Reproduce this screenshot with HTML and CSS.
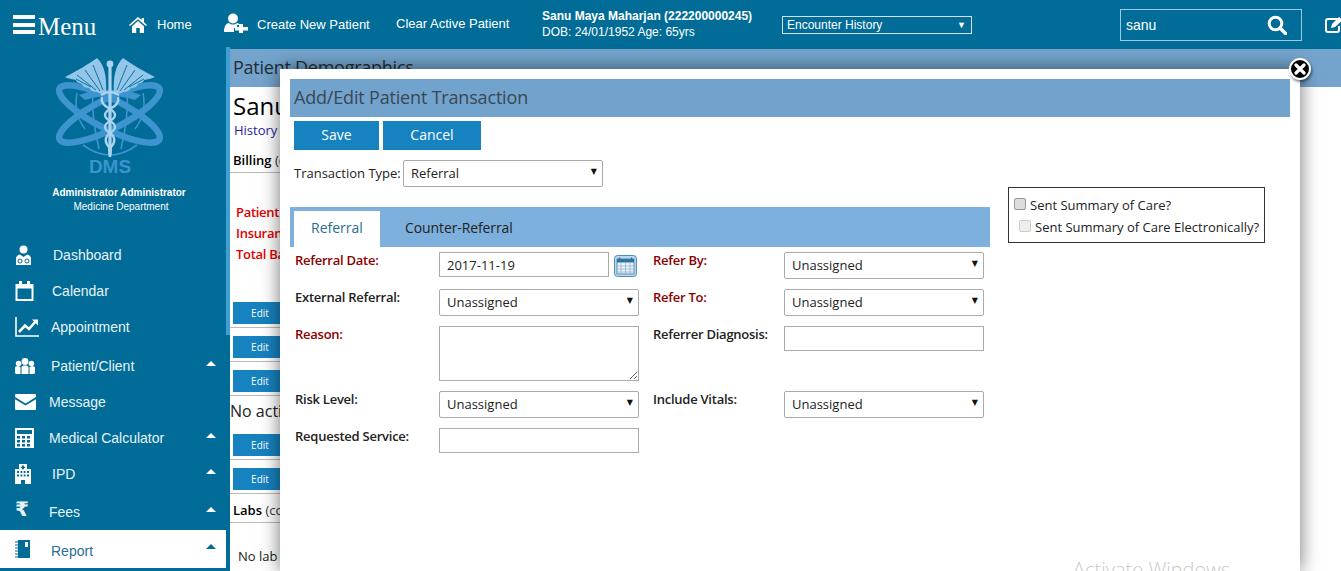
FILE: index.html
```html
<!DOCTYPE html>
<html lang="en">
<head>
    <meta charset="UTF-8">
    <title>Add/Edit Patient Transaction</title>
    <link rel="stylesheet" href="styles.css">
</head>
<body>
    <header class="topbar">
        <div class="menu-toggle">
            <span class="burger"><i></i><i></i><i></i></span>
            <span class="menu-word">Menu</span>
        </div>
        <a class="top-link home-link">
            <svg width="18" height="16" viewBox="0 0 18 16"><path fill="#fff" d="M9 0 L12.5 3 V1 H15 V5.2 L18 8 L17 9 L9 2.2 L1 9 L0 8 Z M3 9.2 L9 4 L15 9.2 V16 H10.8 V11 H7.2 V16 H3 Z"/></svg>
            <span>Home</span>
        </a>
        <a class="top-link new-link">
            <svg width="24" height="20" viewBox="0 0 24 20"><circle cx="9" cy="5.5" r="5" fill="#fff"/><path fill="#fff" d="M0 19 C0 13 2 10.5 5 10 C7 12 11 12 13 10 C14.5 10.2 15.5 11 16 12 H13 V15 H10 V19 Z"/><path fill="#fff" d="M15 11 H19 V14 H24 V17.5 H19 V20.5 H15 V17.5 H11 V14 H15 Z"/></svg>
            <span>Create New Patient</span>
        </a>
        <a class="top-link clear-link">Clear Active Patient</a>
        <div class="patient-info">
            <strong>Sanu Maya Maharjan (222200000245)</strong>
            <span>DOB: 24/01/1952 Age: 65yrs</span>
        </div>
        <div class="encounter">
            <span>Encounter History</span>
            <span class="encounter-arrow">▼</span>
        </div>
        <div class="search-box">
            <span>sanu</span>
            <svg width="20" height="20" viewBox="0 0 20 20"><circle cx="8.5" cy="8.5" r="6.3" fill="none" stroke="#fff" stroke-width="3"/><path d="M13 13 L18.5 18.5" stroke="#fff" stroke-width="3.4" stroke-linecap="round"/></svg>
        </div>
        <svg class="note-icon" width="20" height="18" viewBox="0 0 20 18"><path d="M13 3 H3 Q1 3 1 5 V14 Q1 16 3 16 H12 Q14 16 14 14 V10" fill="none" stroke="#fff" stroke-width="2"/><path d="M6 12 L7 8 L14 1 L18 4 L10 11 Z" fill="#fff"/></svg>
    </header>

    <div class="layout">
        <aside class="sidebar">
            <svg class="logo" width="108" height="122" viewBox="0 0 108 122">
                <!-- globe lines -->
                <g fill="none" stroke="#3d94cf" stroke-width="1.6">
                    <path d="M22 36 Q18 56 30 72"/>
                    <path d="M88 36 Q92 56 80 72"/>
                    <path d="M28 88 Q55 108 82 88"/>
                    <path d="M38 34 Q36 58 44 92"/>
                    <path d="M72 34 Q74 58 66 92"/>
                </g>
                <path d="M24 38 Q55 27 86 38 L80 43 Q55 35 30 43 Z" fill="#3d94cf"/>
                <!-- orbits -->
                <g fill="none" stroke="#3d94cf" stroke-width="6.5">
                    <ellipse cx="54.5" cy="57" rx="56" ry="15" transform="rotate(27 54.5 57)"/>
                    <ellipse cx="54.5" cy="57" rx="56" ry="15" transform="rotate(-27 54.5 57)"/>
                </g>
                <!-- wings -->
                <g fill="#93c6e8">
                    <path d="M51 36 C52 22 50 8 42 1 C34 7 20 15 10 20 C14 22 18 22 21 23 C21 25 24 26 27 27 C28 30 31 31 34 31 C36 34 39 35 42 35 C45 37 48 37 51 36 Z"/>
                    <path d="M59 36 C58 22 60 8 68 1 C76 7 90 15 100 20 C96 22 92 22 89 23 C89 25 86 26 83 27 C82 30 79 31 76 31 C74 34 71 35 68 35 C65 37 62 37 59 36 Z"/>
                </g>
                <g fill="none" stroke="#006c97" stroke-width="0.9">
                    <path d="M48 33 L38 8 M45 34 L30 13 M41 33 L22 18 M36 30 L21 22"/>
                    <path d="M62 33 L72 8 M65 34 L80 13 M69 33 L88 18 M74 30 L89 22"/>
                </g>
                <!-- staff and snakes -->
                <path d="M55 4 V98" stroke="#a9d3ef" stroke-width="3.2"/>
                <circle cx="55" cy="7" r="3.4" fill="#a9d3ef"/>
                <g fill="none" stroke="#a9d3ef" stroke-width="2.4">
                    <path d="M47 40 Q45 47 55 52 Q65 58 55 64 Q45 70 55 76 Q63 82 56 90 L55 100"/>
                    <path d="M63 40 Q65 47 55 52 Q45 58 55 64 Q65 70 55 76 Q47 82 54 90 L55 100"/>
                    <path d="M46 38 Q55 32 64 38"/>
                </g>
                <text class="logo-text" x="55" y="116">DMS</text>
            </svg>
            <div class="user-name">Administrator Administrator</div>
            <div class="user-dept">Medicine Department</div>

            <nav class="nav">
                <a class="nav-item">
                    <span class="nav-icon w38"><svg width="17" height="20" viewBox="0 0 17 20"><circle cx="8.5" cy="4.5" r="4" fill="#fff"/><path fill="#fff" d="M1 20 V14 Q1 10 5 9.5 L8.5 12 L12 9.5 Q16 10 16 14 V20 Z"/><circle cx="5" cy="16" r="2" fill="none" stroke="#006c97"/><circle cx="12" cy="16" r="2" fill="none" stroke="#006c97"/></svg></span>
                    <span>Dashboard</span>
                </a>
                <a class="nav-item">
                    <span class="nav-icon w37"><svg width="19" height="20" viewBox="0 0 19 20"><path fill="#fff" d="M1 3 H4 V0 H7 V3 H12 V0 H15 V3 H18.5 V20 H0.5 V3 Z M2.5 7.5 V18 H16.5 V7.5 Z"/></svg></span>
                    <span>Calendar</span>
                </a>
                <a class="nav-item">
                    <span class="nav-icon w36"><svg width="24" height="20" viewBox="0 0 24 20"><path d="M1 0 V19 H24" fill="none" stroke="#fff" stroke-width="1.6"/><path d="M4 15 L10 8.5 L14 12 L21 4" fill="none" stroke="#fff" stroke-width="2.6"/><path d="M17 2.5 H23 V8.5 Z" fill="#fff"/></svg></span>
                    <span>Appointment</span>
                </a>
                <a class="nav-item nav-gap3">
                    <span class="nav-icon w36"><svg width="20" height="16" viewBox="0 0 20 16"><circle cx="10" cy="3.5" r="3.4" fill="#fff"/><circle cx="3.6" cy="5.5" r="2.8" fill="#fff"/><circle cx="16.4" cy="5.5" r="2.8" fill="#fff"/><path fill="#fff" d="M0 15 V10 Q0 8 3 8 L5.5 9 V16 H1 Z M14.5 9 L17 8 Q20 8 20 10 V15 L19 16 H14.5 Z M6.5 16 V9 Q7 7.5 8.5 7.5 H11.5 Q13 7.5 13.5 9 V16 Z"/></svg></span>
                    <span>Patient/Client</span>
                    <i class="caret"></i>
                </a>
                <a class="nav-item">
                    <span class="nav-icon w34"><svg width="21" height="16" viewBox="0 0 21 16"><path fill="#fff" d="M0 1 Q0 0 1 0 H20 Q21 0 21 1 V3 L10.5 9.5 L0 3 Z M0 5.2 L10.5 11.5 L21 5.2 V15 Q21 16 20 16 H1 Q0 16 0 15 Z"/></svg></span>
                    <span>Message</span>
                </a>
                <a class="nav-item">
                    <span class="nav-icon w34"><svg width="19" height="20" viewBox="0 0 19 20"><path fill="#fff" fill-rule="evenodd" d="M0 0 H19 V20 H0 Z M2 2 V6 H17 V2 Z M2 8 V10.5 H5 V8 Z M7 8 V10.5 H10 V8 Z M12 8 V10.5 H15 V8 Z M2 12 V14.5 H5 V12 Z M7 12 V14.5 H10 V12 Z M12 12 V14.5 H15 V12 Z M2 16 V18.5 H5 V16 Z M7 16 V18.5 H10 V16 Z M12 16 V18.5 H15 V16 Z"/></svg></span>
                    <span>Medical Calculator</span>
                    <i class="caret"></i>
                </a>
                <a class="nav-item">
                    <span class="nav-icon w37"><svg width="16" height="20" viewBox="0 0 16 20"><path fill="#fff" fill-rule="evenodd" d="M0 5 H4 V0 H12 V5 H16 V20 H10 V16 H6 V20 H0 Z M7 1.5 V2.8 H5.8 V4 H7 V5.3 H9 V4 H10.2 V2.8 H9 V1.5 Z M2 7 V9 H4 V7 Z M5.5 7 V9 H7.3 V7 Z M8.7 7 V9 H10.5 V7 Z M12 7 V9 H14 V7 Z M2 10.5 V12.5 H4 V10.5 Z M5.5 10.5 V12.5 H7.3 V10.5 Z M8.7 10.5 V12.5 H10.5 V10.5 Z M12 10.5 V12.5 H14 V10.5 Z"/></svg></span>
                    <span>IPD</span>
                    <i class="caret"></i>
                </a>
                <a class="nav-item nav-gap2">
                    <span class="nav-icon w34 nav-rupee">₹</span>
                    <span>Fees</span>
                    <i class="caret"></i>
                </a>
                <a class="nav-item nav-active">
                    <span class="nav-icon w36"><svg width="15" height="18" viewBox="0 0 15 18"><path fill="#006c97" d="M3 0 H15 V18 H3 Z"/><path d="M0 2 H4 M0 5 H4 M0 8 H4 M0 11 H4 M0 14 H4 M0 17 H4" stroke="#006c97" stroke-width="1.2"/><path d="M10 2 H13 V7 H10 Z" fill="#fff"/></svg></span>
                    <span>Report</span>
                    <i class="caret"></i>
                </a>
            </nav>
        </aside>

        <div class="accent-strip"></div>

        <main class="page">
            <h2 class="page-title">Patient Demographics</h2>
            <div class="page-inner">
                <div class="patient-name">Sanu Maya Maharjan</div>
                <a class="history-link">History</a>
                <div class="section-head billing-head"><b>Billing</b> (expand)</div>
                <div class="balance">
                    <div>Patient Balance Due</div>
                    <div>Insurance Balance Due</div>
                    <div>Total Balance Due</div>
                </div>
                <div class="edit-row edit-first"><span class="edit-btn">Edit</span></div>
                <div class="edit-row"><span class="edit-btn">Edit</span></div>
                <div class="edit-row"><span class="edit-btn">Edit</span></div>
                <div class="no-active">No active</div>
                <div class="edit-row"><span class="edit-btn">Edit</span></div>
                <div class="edit-row"><span class="edit-btn">Edit</span></div>
                <div class="section-head labs-head"><b>Labs</b> (collapse)</div>
                <div class="no-labs">No lab data</div>
            </div>
        </main>
    </div>

    <!-- transaction popup -->
    <section class="modal">
        <span class="modal-close"><svg width="12" height="12" viewBox="0 0 12 12"><path d="M2 2 L10 10 M10 2 L2 10" stroke="#fff" stroke-width="3.2" stroke-linecap="round"/></svg></span>
        <h3 class="modal-title">Add/Edit Patient Transaction</h3>
        <div class="modal-actions">
            <button class="btn btn-save">Save</button>
            <button class="btn btn-cancel">Cancel</button>
        </div>

        <div class="modal-body">
            <div class="modal-left">
                <div class="type-row">
                    <label>Transaction Type:</label>
                    <div class="select-wrap type-select">
                        <select><option>Referral</option></select>
                    </div>
                </div>

                <div class="tabs">
                    <a class="tab tab-active">Referral</a>
                    <a class="tab tab-other">Counter-Referral</a>
                </div>

                <div class="form-grid">
                    <label class="req">Referral Date:</label>
                    <div class="date-field">
                        <input class="text-input date-input" type="text" value="2017-11-19">
                        <svg width="23" height="22" viewBox="0 0 23 22"><rect x="0.5" y="0.5" width="22" height="21" rx="3" fill="#bcd8ec" stroke="#4f8fb8"/><rect x="3" y="4" width="17" height="15" fill="#eef5fa" stroke="#5d8fb0"/><rect x="3" y="4" width="17" height="3.5" fill="#2f74a0"/><path d="M5.5 2.5 V5 M17.5 2.5 V5" stroke="#2f74a0" stroke-width="1.4"/><path d="M3 11 H20 M3 14 H20 M3 17 H20 M7 8 V19 M11.5 8 V19 M16 8 V19" stroke="#8fb3cc" stroke-width="0.8"/></svg>
                    </div>
                    <label class="req">Refer By:</label>
                    <div class="select-wrap"><select><option>Unassigned</option></select></div>

                    <label>External Referral:</label>
                    <div class="select-wrap"><select><option>Unassigned</option></select></div>
                    <label class="req">Refer To:</label>
                    <div class="select-wrap"><select><option>Unassigned</option></select></div>

                    <label class="req">Reason:</label>
                    <textarea class="text-area"></textarea>
                    <label>Referrer Diagnosis:</label>
                    <input class="text-input" type="text">

                    <label>Risk Level:</label>
                    <div class="select-wrap"><select><option>Unassigned</option></select></div>
                    <label>Include Vitals:</label>
                    <div class="select-wrap"><select><option>Unassigned</option></select></div>

                    <label>Requested Service:</label>
                    <input class="text-input" type="text">
                </div>
            </div>

            <div class="summary-box">
                <label class="check-line"><input type="checkbox" class="check"> Sent Summary of Care?</label>
                <label class="check-line check-second"><input type="checkbox" class="check" disabled> Sent Summary of Care Electronically?</label>
            </div>
        </div>
    </section>

    <div class="watermark">Activate Windows</div>
</body>
</html>
```

FILE: styles.css
```css
* {
    box-sizing: border-box;
}

html, body {
    margin: 0;
    padding: 0;
    height: 571px;
    overflow: hidden;
}

body {
    position: relative;
    font-family: "Liberation Sans", Arial, sans-serif;
    background-color: #fff;
}

/* top bar */
.topbar {
    display: flex;
    align-items: center;
    height: 49px;
    background-color: #006c97;
    color: #fff;
    position: relative;
    z-index: 1;
}

.topbar > * {
    flex-shrink: 0;
}

.menu-toggle {
    display: flex;
    align-items: center;
    margin-left: 13px;
    width: 116px;
}

.burger {
    display: flex;
    flex-direction: column;
    gap: 3.5px;
    width: 22px;
}

.burger i {
    display: block;
    height: 4px;
    background-color: #fff;
}

.menu-word {
    font-family: "Liberation Serif", serif;
    font-size: 25px;
    margin-left: 3px;
    margin-top: 4px;
}

.top-link {
    display: flex;
    align-items: center;
    font-size: 13px;
    color: #fff;
}

.home-link {
    gap: 10px;
    width: 95px;
}

.new-link {
    gap: 9px;
    width: 172px;
}

.new-link svg {
    margin-top: -3px;
}

.clear-link {
    width: 146px;
    margin-top: -2px;
}

.patient-info {
    display: flex;
    flex-direction: column;
    font-size: 12px;
    line-height: 16px;
    width: 240px;
    margin-top: -2px;
}

.encounter {
    display: flex;
    align-items: center;
    justify-content: space-between;
    width: 190px;
    height: 18px;
    padding: 0 5px 0 4px;
    border: 1px solid #cfe3ee;
    font-size: 12px;
}

.encounter-arrow {
    font-size: 9px;
}

.search-box {
    display: flex;
    align-items: center;
    justify-content: space-between;
    width: 182px;
    height: 32px;
    margin-left: 148px;
    padding: 0 14px 0 5px;
    border: 1px solid #9cc9dd;
    font-size: 14px;
}

.note-icon {
    margin-left: 23px;
}

/* sidebar and page behind the popup */
.layout {
    display: flex;
    height: 522px;
    background-color: #006c97;
}

.sidebar {
    width: 226px;
    flex-shrink: 0;
    padding-top: 8px;
    color: #fff;
}

.logo {
    display: block;
    margin-left: 55px;
}

.logo-text {
    font-family: "Liberation Sans", Arial, sans-serif;
    font-size: 19px;
    font-weight: bold;
    text-anchor: middle;
    fill: #3d94cf;
}

.user-name,
.user-dept {
    text-align: center;
    line-height: 14px;
}

.user-name {
    padding-left: 12px;
    font-size: 10px;
    font-weight: bold;
    margin-top: 7px;
}

.user-dept {
    padding-left: 16px;
    font-size: 10px;
}

.nav {
    margin-top: 23px;
}

.nav-item {
    display: flex;
    align-items: center;
    height: 36px;
    padding-left: 15px;
    font-size: 14px;
    color: #e8f3f8;
}

.nav-gap3 {
    margin-top: 3px;
}

.nav-gap2 {
    margin-top: 2px;
}

.nav-icon {
    display: flex;
    align-items: center;
    flex-shrink: 0;
}

.w34 { width: 34px; }
.w36 { width: 36px; }
.w37 { width: 37px; }
.w38 { width: 38px; }

.nav-rupee {
    font-family: "DejaVu Sans", sans-serif;
    font-size: 20px;
    font-weight: bold;
    margin-top: -6px;
}

.caret {
    width: 0;
    height: 0;
    margin-left: auto;
    margin-right: 10px;
    margin-top: -5px;
    border-left: 5px solid transparent;
    border-right: 5px solid transparent;
    border-bottom: 5px solid #fff;
}

.nav-active {
    height: 38px;
    background-color: #fff;
    color: #2a6f93;
    padding-top: 4px;
}

.nav-active .nav-icon {
    margin-top: -4px;
}

.nav-active .caret {
    border-bottom-color: #006c97;
    margin-top: -9px;
}

.accent-strip {
    width: 4px;
    height: 288px;
    margin-top: -2px;
    background-color: #3f9fd2;
    z-index: 2;
}

.page {
    flex: 1;
    height: 522px;
    background-color: #fff;
    font-family: "Open Sans", sans-serif;
    color: #222;
    overflow: hidden;
}

.page-title {
    margin: 0;
    height: 38px;
    padding-left: 3px;
    background-color: #74a4cc;
    font-size: 18px;
    font-weight: 400;
    letter-spacing: -0.25px;
    line-height: 36px;
    color: #1f2d38;
}

.page-inner {
    width: 500px;
}

.patient-name {
    margin: 4px 0 0 3px;
    font-size: 24px;
    line-height: 30px;
    color: #000;
    white-space: nowrap;
}

.history-link {
    display: block;
    margin: 0 0 0 4px;
    font-size: 13px;
    line-height: 18px;
    color: #2a1ea0;
}

.section-head {
    padding-left: 3px;
    font-size: 13px;
    color: #333;
    white-space: nowrap;
    border-bottom: 1px solid #bbb;
}

.section-head b {
    font-weight: 600;
    color: #000;
}

.billing-head {
    margin-top: 12px;
    height: 22px;
    line-height: 18px;
}

.balance {
    margin: 29px 0 0 6px;
    font-size: 13px;
    font-weight: 600;
    letter-spacing: -0.3px;
    line-height: 21px;
    color: #e00000;
    white-space: nowrap;
}

.edit-row {
    height: 34px;
    padding: 8px 0 0 3px;
    border-bottom: 1px solid #bbb;
}

.edit-first {
    margin-top: 29px;
}

.edit-btn {
    display: block;
    width: 54px;
    height: 22px;
    background-color: #1682bf;
    color: #fff;
    font-size: 10px;
    line-height: 22px;
    text-align: center;
}

.no-active {
    height: 30px;
    font-size: 16px;
    line-height: 30px;
    white-space: nowrap;
}

.labs-head {
    height: 29px;
    line-height: 32px;
}

.no-labs {
    margin: 24px 0 0 8px;
    font-size: 13px;
    line-height: 18px;
    white-space: nowrap;
}

/* popup */
.modal {
    position: absolute;
    left: 280px;
    top: 69px;
    width: 1020px;
    height: 502px;
    padding: 10px;
    background-color: #fff;
    box-shadow: 0 0 18px rgba(0, 0, 0, 0.55);
    font-family: "Open Sans", sans-serif;
    font-size: 13px;
    color: #222;
    z-index: 3;
}

.modal-close {
    position: absolute;
    top: -11px;
    right: -11px;
    display: flex;
    align-items: center;
    justify-content: center;
    width: 22px;
    height: 22px;
    border-radius: 50%;
    background-color: #000;
    border: 2px solid #fff;
    box-shadow: 1px 2px 3px rgba(0, 0, 0, 0.5);
}

.modal-title {
    margin: 0;
    height: 38px;
    padding-left: 4px;
    background-color: #72a3cc;
    font-size: 18px;
    font-weight: 400;
    letter-spacing: -0.18px;
    line-height: 37px;
    color: #3a4854;
}

.modal-actions {
    display: flex;
    gap: 4px;
    margin-top: 4px;
    padding-left: 4px;
}

.btn {
    height: 29px;
    padding: 0 0 2px;
    border: 0;
    background-color: #1682bf;
    color: #fff;
    font-family: "Open Sans", sans-serif;
    font-size: 14px;
}

.btn-save {
    width: 85px;
}

.btn-cancel {
    width: 98px;
}

.modal-body {
    display: flex;
    margin-top: 10px;
}

.modal-left {
    width: 700px;
    flex-shrink: 0;
}

.type-row {
    display: flex;
    align-items: center;
    gap: 3px;
    padding-left: 4px;
    height: 27px;
}

.type-row label {
    width: 106px;
    margin-top: -2px;
    white-space: nowrap;
}

.type-select {
    width: 200px;
}

.tabs {
    display: flex;
    align-items: flex-end;
    height: 40px;
    margin-top: 20px;
    padding-left: 4px;
    background-color: #7db0dc;
}

.tab {
    display: block;
    height: 36px;
    padding: 0 25px 0 17px;
    font-size: 14px;
    line-height: 34px;
    color: #222;
}

.tab-active {
    width: 86px;
    padding: 0 0 0 17px;
    background-color: #fff;
    color: #2a6f8f;
}

.tab-other {
    margin-left: 8px;
    letter-spacing: -0.1px;
}

.form-grid {
    display: grid;
    grid-template-columns: 144px 214px 131px 200px;
    align-items: start;
    row-gap: 10px;
    margin-top: 5px;
    padding-left: 5px;
}

.form-grid label {
    font-weight: 600;
    letter-spacing: -0.25px;
    line-height: 16px;
    white-space: nowrap;
    color: #222;
}

.form-grid label.req {
    color: #8b0000;
}

.text-input {
    display: block;
    width: 200px;
    height: 25px;
    padding: 0 7px;
    border: 1px solid #aaa;
    font-family: "Open Sans", sans-serif;
    font-size: 13px;
    color: #222;
}

.date-field {
    display: flex;
    align-items: flex-start;
    gap: 5px;
}

.date-input {
    width: 170px;
}

.date-field svg {
    margin-top: 3px;
}

.text-area {
    display: block;
    width: 200px;
    height: 55px;
    padding: 0;
    border: 1px solid #aaa;
}

.select-wrap {
    position: relative;
    width: 200px;
    height: 27px;
}

.select-wrap select {
    display: block;
    width: 100%;
    height: 27px;
    padding: 0 7px 2px;
    border: 1px solid #aaa;
    border-radius: 2px;
    background-color: #fff;
    font-family: "Open Sans", sans-serif;
    font-size: 13px;
    color: #222;
    appearance: none;
}

.select-wrap::after {
    content: "▼";
    position: absolute;
    right: 6px;
    top: 7px;
    font-family: "DejaVu Sans", sans-serif;
    font-size: 8px;
    color: #111;
}

.summary-box {
    width: 257px;
    height: 56px;
    margin: 27px 0 0 18px;
    padding-left: 5px;
    border: 1px solid #333;
}

.check-line {
    display: flex;
    align-items: center;
    gap: 4px;
    height: 22px;
    white-space: nowrap;
}

.check-line:first-child {
    margin-top: 6px;
}

.check-second {
    padding-left: 5px;
}

.check {
    width: 12px;
    height: 12px;
    margin: -3px 0 0 0;
    border: 1px solid #999;
    border-radius: 2px;
    background-color: #ddd;
    appearance: none;
}

.check:disabled {
    border-color: #ccc;
    background-color: #eee;
}

.watermark {
    position: absolute;
    left: 1073px;
    top: 558px;
    font-family: "Open Sans", sans-serif;
    font-size: 20px;
    font-weight: 300;
    line-height: 24px;
    color: #c9c9c9;
    z-index: 4;
}
```
